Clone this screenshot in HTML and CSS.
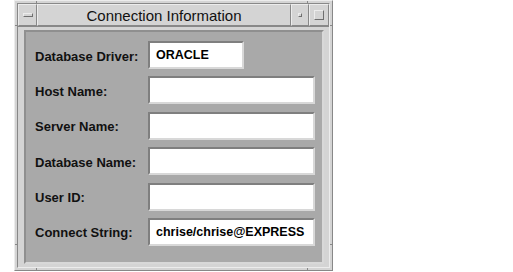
FILE: index.html
```html
<!DOCTYPE html>
<html lang="en">
<head>
  <meta charset="UTF-8">
  <title>Connection Information</title>
  <link rel="stylesheet" href="styles.css">
</head>
<body>
  <div class="window">
    <span class="mark mark-top mark-l"></span>
    <span class="mark mark-top mark-r"></span>
    <span class="mark mark-bottom mark-l"></span>
    <span class="mark mark-bottom mark-r"></span>
    <span class="mark mark-side mark-left mark-t"></span>
    <span class="mark mark-side mark-left mark-b"></span>
    <span class="mark mark-side mark-right mark-t"></span>
    <span class="mark mark-side mark-right mark-b"></span>

    <div class="frame">
      <div class="titlebar">
        <div class="tb-btn menu-btn"><span class="menu-bar"></span></div>
        <div class="title">Connection Information</div>
        <div class="tb-btn min-btn"><span class="min-box"></span></div>
        <div class="tb-btn max-btn"><span class="max-box"></span></div>
      </div>

      <div class="client">
        <div class="panel">
          <label class="label">Database Driver:</label>
          <div class="field short">ORACLE</div>

          <label class="label">Host Name:</label>
          <div class="field"></div>

          <label class="label">Server Name:</label>
          <div class="field"></div>

          <label class="label">Database Name:</label>
          <div class="field"></div>

          <label class="label">User ID:</label>
          <div class="field"></div>

          <label class="label">Connect String:</label>
          <div class="field">chrise/chrise@EXPRESS</div>
        </div>
      </div>
    </div>
  </div>
</body>
</html>
```

FILE: styles.css
```css
:root {
  --frame: #d4d4d4;
  --light: #ececec;
  --dark: #888888;
  --panel: #a9a9a9;
}

* {
  box-sizing: border-box;
}

body {
  margin: 0;
  background: #ffffff;
  font-family: 'Liberation Sans', Arial, sans-serif;
  color: #000;
}

.window {
  position: relative;
  margin-left: 14px;
  width: 319px;
  height: 271px;
  background: var(--frame);
  border: 1px solid;
  border-color: var(--light) var(--dark) var(--dark) var(--light);
  padding: 2px;
}

/* resize handle marks on the outer frame */
.mark {
  position: absolute;
  background: var(--dark);
}

.mark-top, .mark-bottom {
  width: 1px;
  height: 2px;
}

.mark-top { top: 0; }
.mark-bottom { bottom: 0; }
.mark-l { left: 21px; }
.mark-r { left: 292px; }

.mark-side {
  width: 2px;
  height: 1px;
}

.mark-left { left: 0; }
.mark-right { right: 0; }
.mark-t { top: 24px; }
.mark-b { top: 243px; }

.frame {
  height: 100%;
  border: 1px solid;
  border-color: var(--dark) var(--light) var(--light) var(--dark);
  display: flex;
  flex-direction: column;
}

.titlebar {
  display: flex;
  height: 23px;
  border-bottom: 1px solid var(--dark);
}

.tb-btn, .title {
  border: 1px solid;
  border-color: var(--light) var(--dark) var(--dark) var(--light);
  display: flex;
  align-items: center;
  justify-content: center;
}

.menu-btn { width: 19px; }
.min-btn { width: 18px; }
.max-btn { width: 20px; }

.title {
  flex: 1;
  font-size: 15px;
  padding-top: 1px;
  color: #111;
}

.menu-bar {
  width: 10px;
  height: 4px;
  border: 1px solid;
  border-color: var(--light) #6f6f6f #6f6f6f var(--light);
}

.min-box {
  width: 4px;
  height: 4px;
  border: 1px solid;
  border-color: var(--light) #6f6f6f #6f6f6f var(--light);
}

.max-box {
  width: 10px;
  height: 10px;
  border: 1px solid;
  border-color: var(--light) #6f6f6f #6f6f6f var(--light);
}

.client {
  flex: 1;
  padding: 3px 5px 3px 6px;
}

.panel {
  height: 100%;
  background: var(--panel);
  border: 2px solid;
  border-color: #8f8f8f #d8d8d8 #d8d8d8 #8f8f8f;
  padding: 9px 0 0 9px;
  display: grid;
  grid-template-columns: 113px auto;
  row-gap: 7.4px;
  align-content: start;
  justify-items: start;
}

.label {
  align-self: center;
  padding-top: 2px;
  font-size: 13px;
  font-weight: bold;
  color: #111;
}

.field {
  width: 167px;
  height: 28px;
  background: #ffffff;
  border: 2px solid;
  border-color: #7f7f7f #d8d8d8 #d8d8d8 #7f7f7f;
  padding-left: 6px;
  display: flex;
  align-items: center;
  font-size: 12.5px;
  font-weight: bold;
}

.field.short {
  width: 96px;
}
```
